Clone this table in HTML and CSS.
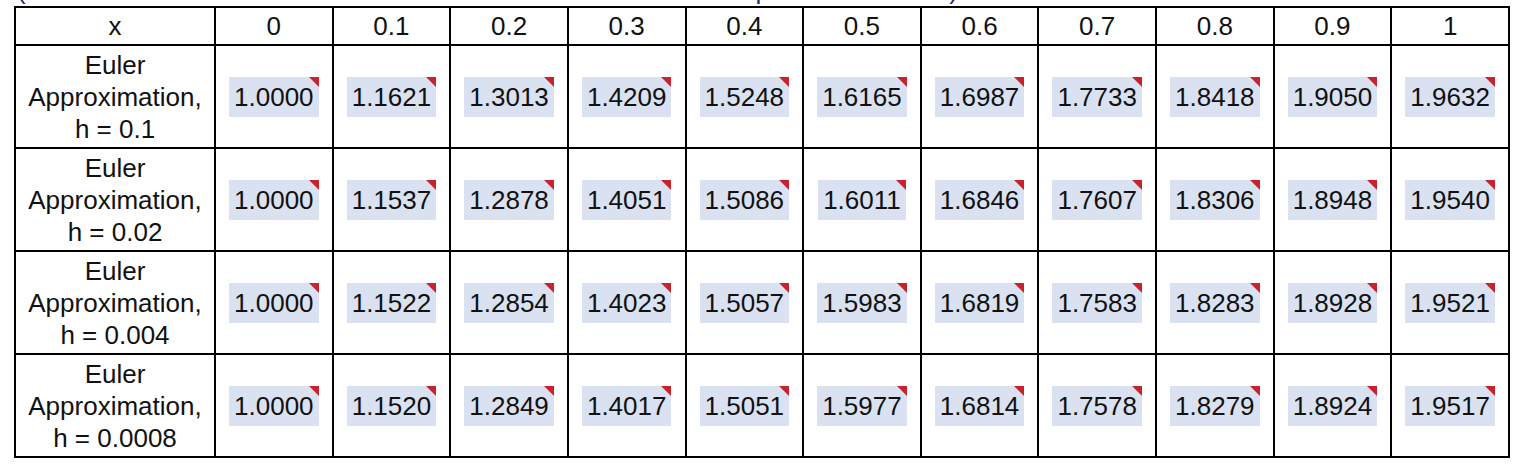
FILE: index.html
```html
<!DOCTYPE html>
<html lang="en">
<head>
    <meta charset="UTF-8">
    <meta name="viewport" content="width=device-width, initial-scale=1.0">
    <title>Euler Approximations</title>
    <link rel="stylesheet" href="styles.css">
</head>
<body>

    <div class="container">
        <!-- caption line, mostly scrolled out of view -->
        <div class="caption">
            <span>(Numerical values obtained with the Euler method for all four step sizes h chosen)</span>
        </div>

        <table class="euler-table">
            <colgroup>
                <col class="label-col">
            </colgroup>
            <thead>
                <tr>
                    <th>x</th>
                    <th>0</th>
                    <th>0.1</th>
                    <th>0.2</th>
                    <th>0.3</th>
                    <th>0.4</th>
                    <th>0.5</th>
                    <th>0.6</th>
                    <th>0.7</th>
                    <th>0.8</th>
                    <th>0.9</th>
                    <th>1</th>
                </tr>
            </thead>
            <tbody id="rows">
                <!-- rows are filled in below -->
            </tbody>
        </table>
    </div>

    <script>
        const results = [
            { h: '0.1', values: ['1.0000', '1.1621', '1.3013', '1.4209', '1.5248', '1.6165', '1.6987', '1.7733', '1.8418', '1.9050', '1.9632'] },
            { h: '0.02', values: ['1.0000', '1.1537', '1.2878', '1.4051', '1.5086', '1.6011', '1.6846', '1.7607', '1.8306', '1.8948', '1.9540'] },
            { h: '0.004', values: ['1.0000', '1.1522', '1.2854', '1.4023', '1.5057', '1.5983', '1.6819', '1.7583', '1.8283', '1.8928', '1.9521'] },
            { h: '0.0008', values: ['1.0000', '1.1520', '1.2849', '1.4017', '1.5051', '1.5977', '1.6814', '1.7578', '1.8279', '1.8924', '1.9517'] }
        ];

        // Build one table row per step size
        function renderRows() {
            let tbody = document.getElementById('rows');
            results.forEach(function (row) {
                let tr = tbody.insertRow();
                let html = `<td class="label">Euler<br>Approximation,<br>h = ${row.h}</td>`;
                row.values.forEach(function (v) {
                    html += `<td><span class="value">${v}</span></td>`;
                });
                tr.innerHTML = html;
            });
        }

        renderRows();
    </script>

</body>
</html>
```

FILE: styles.css
```css
body, html {
    margin: 0;
    padding: 0;
    font-family: "Liberation Sans", Arial, sans-serif;
    background-color: #ffffff;
    color: #111111;
}
.container {
    padding-left: 14px;
}
.caption {
    height: 6px;
    overflow: hidden;
    position: relative;
}
.caption span {
    display: block;
    font-size: 26px;
    line-height: 26px;
    margin-top: -23px;
    padding-left: 3px;
    color: #1c2a8c;
    white-space: nowrap;
}
.euler-table {
    border-collapse: collapse;
    table-layout: fixed;
    width: 1496px;
    font-size: 26px;
}
.label-col {
    width: 200px;
}
.euler-table th, .euler-table td {
    border: 2px solid #000000;
    text-align: center;
    padding: 0;
}
.euler-table th {
    font-weight: normal;
    height: 36px;
    line-height: 36px;
}
.euler-table td {
    height: 101px;
}
.euler-table td.label {
    line-height: 32px;
}
.value {
    display: inline-block;
    position: relative;
    background-color: #dae1f0;
    height: 40px;
    line-height: 40px;
    padding: 0 5px;
    vertical-align: middle;
}
.value::after {
    content: "";
    position: absolute;
    top: 0;
    right: 0;
    border-left: 10px solid transparent;
    border-top: 10px solid #c8232c;
}
```
